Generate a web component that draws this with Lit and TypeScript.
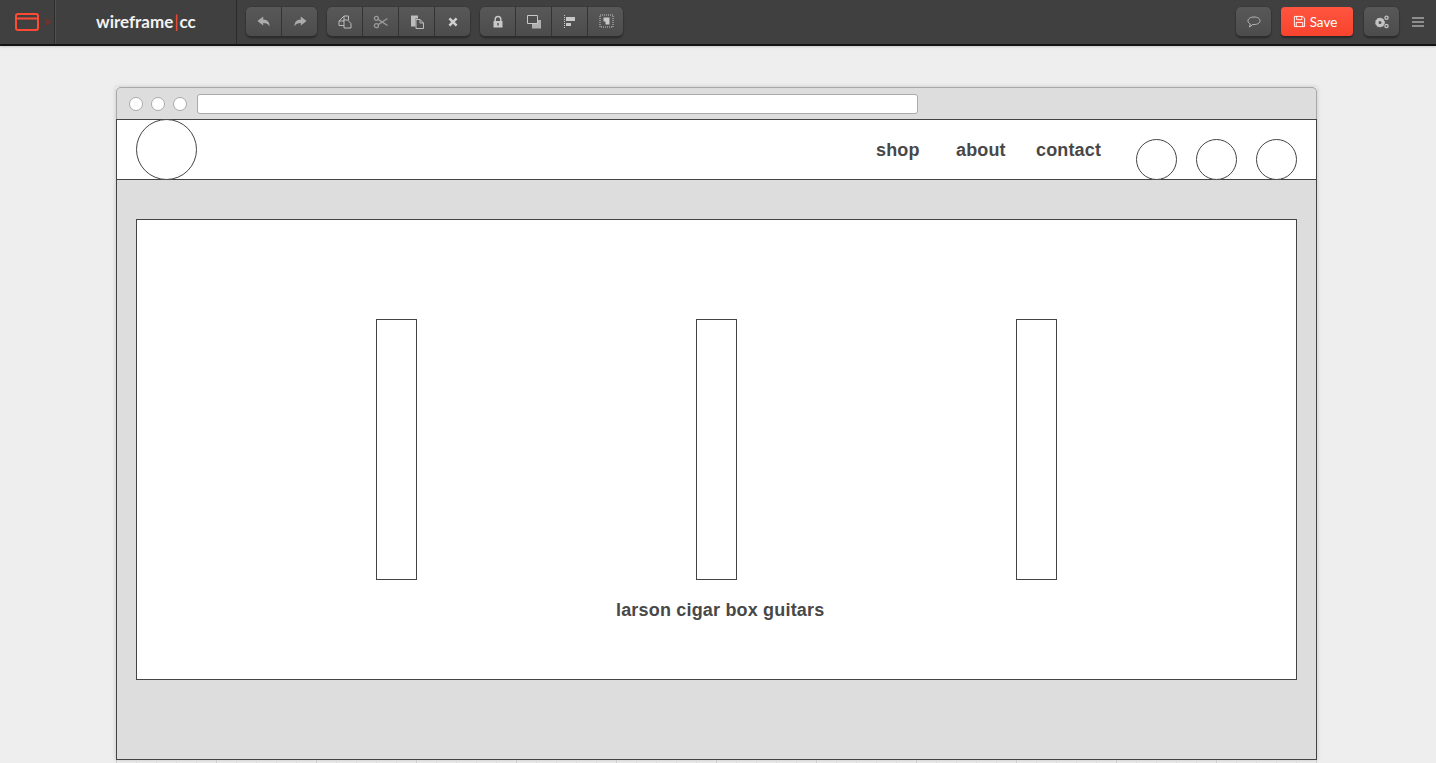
import { LitElement, html, css, svg } from "lit";
import { customElement } from "lit/decorators.js";

const icons: Record<string, unknown> = {
  undo: svg`<path d="M8.200 3.500 2.400 8l5.800 4.500V10c3 0 5 .7 6.300 3.500.3-4.200-1.900-6.800-6.300-7z" fill="#ababab"/>`,
  redo: svg`<path d="M9.800 3.500 15.600 8l-5.800 4.500V10c-3 0-5 .7-6.300 3.500-.3-4.200 1.900-6.800 6.300-7z" fill="#ababab"/>`,
  clone: svg`<path d="M8 3h4.500v4M8 3 3 8v4.500h5M8 3v5H3" fill="none" stroke="#bcbcbc"/><path d="M8 7h3.500L15 10.500V15H8z" fill="#4f4f4f" stroke="#bcbcbc"/>`,
  cut: svg`<g fill="none" stroke="#9a9a9a" stroke-width="1.300"><circle cx="4.400" cy="5.300" r="2"/><circle cx="4.400" cy="12.700" r="2"/><path d="M6.200 6.400 15.500 12.500M6.200 11.600 15.500 5.500"/></g>`,
  paste: svg`<path d="M3 2.500h7v3H7.500v8H3z" fill="#bcbcbc"/><path d="M8 6.500h4l3.500 3.500v5.500H8z" fill="#4f4f4f" stroke="#bcbcbc"/><path d="M12 6.500V10h3.500" fill="none" stroke="#bcbcbc"/>`,
  del: svg`<path d="M6.300 4.500 9 7.200l2.700-2.700 1.800 1.800L10.800 9l2.700 2.700-1.800 1.800L9 10.800l-2.700 2.700-1.800-1.800L7.200 9 4.500 6.300z" fill="#d0d0d0"/>`,
  lock: svg`<path d="M6.200 8V6.200a2.800 2.800 0 0 1 5.600 0V8" fill="none" stroke="#c8c8c8" stroke-width="1.500"/><path d="M4.500 8h9v6.500h-9z" fill="#c8c8c8"/><path d="M8.300 10h1.400v2.500H8.300z" fill="#4f4f4f"/>`,
  order: svg`<path d="M7 7h9v8.500H7z" fill="#b0b0b0"/><path d="M2.500 2.500h10v8h-10z" fill="#4f4f4f" stroke="#c8c8c8"/>`,
  align: svg`<path d="M3.500 2v14" stroke="#c8c8c8" stroke-dasharray="1 1"/><path d="M5 4h9v4H5zM5 10h5v3H5z" fill="#c8c8c8"/>`,
  group: svg`<path d="M3 2h13v12H3z" fill="none" stroke="#c8c8c8" stroke-dasharray="1 1"/><path d="M6.500 4.500h6v4h-6zM8.500 8.500h4v3h-4z" fill="#c8c8c8"/>`,
  comment: svg`<path d="M9 4c3.600 0 6 1.600 6 3.800s-2.400 3.700-6 3.700H7.800L4.500 14l.8-3.100C3.800 10.300 3 9.200 3 7.800 3 5.600 5.400 4 9 4z" fill="none" stroke="#b8b8b8"/>`,
  gears: svg`<g fill="none" stroke="#c4c4c4"><circle cx="7" cy="9.500" r="3" stroke-width="3"/><circle cx="7" cy="9.500" r="4.200" stroke-width="1.200" stroke-dasharray="1.500 1.200"/><circle cx="13.500" cy="4.800" r="1.600" stroke-width="1.300"/><circle cx="13.500" cy="13" r="1.600" stroke-width="1.300"/></g>`,
};

const groups = [
  ["undo", "redo"],
  ["clone", "cut", "paste", "del"],
  ["lock", "order", "align", "group"],
];

@customElement("app-root")
export class AppRoot extends LitElement {
  static styles = css`
    :host { display: block; height: 763px; overflow: hidden; background: #eee; font-family: "Liberation Sans", Arial, sans-serif; }
    .bar { height: 44px; border-bottom: 2px solid #141414; background: #404040; display: flex; align-items: flex-start; box-shadow: 0 1px 2px rgba(0,0,0,.15); }
    .logo { width: 55px; height: 44px; border-right: 1px solid #2c2c2c; box-shadow: 1px 0 0 #505050; display: flex; align-items: center; padding-left: 14px; box-sizing: border-box; gap: 6px; flex: none; }
    .arrow { width: 0; height: 0; border-left: 6px solid #6b3530; border-top: 4px solid transparent; border-bottom: 4px solid transparent; }
    .brand { width: 181px; height: 44px; box-sizing: border-box; border-right: 1px solid #2c2c2c; font: 700 17px/44px Lato, sans-serif; color: #f2f2f2; padding-left: 40px; flex: none; margin-left: 1px; white-space: nowrap; }
    .brand i { font-style: normal; color: #ff4b33; font-weight: 400; margin: 0 1px; }
    .tools { display: flex; gap: 10px; margin: 7px 0 0 9px; }
    .group { display: flex; height: 29px; border-radius: 5px; background: linear-gradient(#585858, #4c4c4c); box-shadow: 0 0 0 .5px #333, 0 2px 2px rgba(0,0,0,.4); }
    .btn { width: 36px; height: 29px; display: flex; align-items: center; justify-content: center; box-sizing: border-box; border-right: 1px solid #333; }
    .btn:last-child { border-right: 0; width: 35px; }
    .btn svg { width: 18px; height: 18px; display: block; }
    .right { margin-left: auto; display: flex; align-items: flex-start; margin-top: 7px; }
    .single { width: 35px; }
    .save { margin-left: 10px; width: 72px; height: 29px; box-sizing: border-box; padding-right: 4px; border-radius: 4px; background: linear-gradient(#ff5540, #f7432d); box-shadow: 0 2px 2px rgba(0,0,0,.4); display: flex; align-items: center; justify-content: center; gap: 4px; color: #fff; font: 400 13.500px Lato, sans-serif; }
    .save svg { width: 13px; height: 13px; }
    .gears { margin-left: 11px; }
    .menu { width: 12px; margin: 10px 12px 0 13px; display: flex; flex-direction: column; gap: 2px; }
    .menu span { height: 2px; background: #8e8e8e; display: block; }

    .frame { margin: 41px 0 0 116px; width: 1201px; box-shadow: 0 0 4px rgba(0,0,0,.18); }
    .chrome { height: 32px; box-sizing: border-box; background: #ddd; border: 1px solid #a8a8a8; border-bottom: 0; border-radius: 5px 5px 0 0; display: flex; align-items: center; padding-left: 12px; gap: 8px; }
    .dot { width: 14px; height: 14px; box-sizing: border-box; border-radius: 50%; background: #fff; border: 1px solid #aaa; }
    .url { width: 721px; height: 20px; box-sizing: border-box; margin-left: 2px; background: #fff; border: 1px solid #aaa; border-radius: 3px; }
    .page { height: 641px; box-sizing: border-box; border: 1px solid #444; background: #ddd; }
    .head { height: 60px; box-sizing: border-box; background: #fff; border-bottom: 1px solid #444; display: flex; padding: 0 19px; align-items: flex-start; }
    .circle { box-sizing: border-box; border-radius: 50%; border: 1px solid #444; background: #fff; flex: none; }
    .big { width: 61px; height: 61px; margin-top: -1px; }
    .small { width: 41px; height: 41px; margin-top: 19px; }
    .nav { margin-left: auto; display: grid; grid-template-columns: 80px 80px 100px; color: #484848; font-weight: 700; font-size: 18px; letter-spacing: .15px; line-height: 60px; height: 59px; }
    .icons { display: flex; gap: 19px; }
    .panel { margin: 39px 19px 0; height: 461px; box-sizing: border-box; border: 1px solid #444; background: #fff; padding: 99px 0 0 239px; }
    .cols { display: flex; gap: 279px; }
    .col { width: 41px; height: 261px; box-sizing: border-box; border: 1px solid #444; background: #fff; }
    .caption { margin: 20px 0 0 240px; color: #484848; font-weight: 700; font-size: 18px; letter-spacing: .18px; line-height: 20px; }
    .ruler { height: 3px; margin: 0 0 0 116px; width: 1201px; background:
      repeating-linear-gradient(90deg, #ccc 0 1px, transparent 1px 100px),
      repeating-linear-gradient(90deg, #dcdcdc 0 1px, transparent 1px 20px); }
  `;

  render() {
    const btn = (n: string) => html`<div class="btn"><svg viewBox="0 0 18 18">${icons[n]}</svg></div>`;
    return html`
      <div class="bar">
        <div class="logo">
          <svg width="26" height="20" viewBox="0 0 26 20" fill="none" stroke="#ff4b33" stroke-width="2"><rect x="2" y="2" width="22" height="16" rx="2"/><path d="M2 6.500h22"/></svg>
          <span class="arrow"></span>
        </div>
        <div class="brand">wireframe<i>|</i>cc</div>
        <div class="tools">
          ${groups.map((g) => html`<div class="group">${g.map(btn)}</div>`)}
        </div>
        <div class="right">
          <div class="group single">${btn("comment")}</div>
          <div class="save">
            <svg viewBox="0 0 14 14" fill="none" stroke="#fff"><path d="M1.500 1.500h9l2 2v9h-11z"/><path d="M4 1.500v3.500h5.500v-3.500M3.500 12.500v-4.500h7v4.500"/></svg>
            <span>Save</span>
          </div>
          <div class="group single gears">${btn("gears")}</div>
          <div class="menu"><span></span><span></span><span></span></div>
        </div>
      </div>

      <div class="frame">
        <div class="chrome">
          <div class="dot"></div><div class="dot"></div><div class="dot"></div>
          <div class="url"></div>
        </div>
        <div class="page">
          <div class="head">
            <div class="circle big"></div>
            <div class="nav"><span>shop</span><span>about</span><span>contact</span></div>
            <div class="icons">
              <div class="circle small"></div><div class="circle small"></div><div class="circle small"></div>
            </div>
          </div>
          <div class="panel">
            <div class="cols"><div class="col"></div><div class="col"></div><div class="col"></div></div>
            <div class="caption">larson cigar box guitars</div>
          </div>
        </div>
      </div>
      <div class="ruler"></div>
    `;
  }
}
